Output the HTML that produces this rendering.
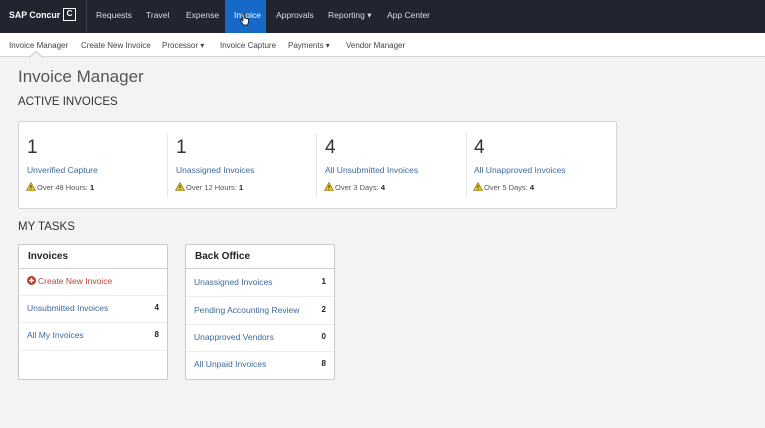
<!DOCTYPE html>
<html><head><meta charset="utf-8"><style>
*{margin:0;padding:0;box-sizing:border-box}
body{width:765px;height:428px;overflow:hidden;background:#f3f3f3;font-family:"Liberation Sans",Arial,sans-serif;position:relative;color:#333}
.a{position:absolute;white-space:nowrap}
.top{position:absolute;left:0;top:0;width:765px;height:33px;background:#21252f}
.nav{color:#d8dbe0;font-size:8.5px;top:10px}
.sub{position:absolute;left:0;top:33px;width:765px;height:24px;background:#fff;border-bottom:1px solid #d5d5d5}
.sn{color:#444;font-size:8px;top:41px}
.card{position:absolute;left:18px;top:121px;width:599px;height:88px;background:#fff;border:1px solid #d6d6d6;border-radius:2px}
.num{font-size:19px;color:#333;top:137px}
.lnk{color:#3d6a9a;font-size:8.5px}
.w{font-size:7.5px;color:#555;top:183px}
.w b{color:#222}
.vd{position:absolute;top:133px;width:1px;height:64px;background:#e6e6e6}
.pan{position:absolute;top:244px;width:150px;height:136px;background:#fff;border:1px solid #c9c9c9;border-radius:2px}
.ph{position:absolute;left:0;top:0;width:100%;height:24px;border-bottom:1px solid #cfcfcf;font-weight:bold;font-size:10px;padding:6px 0 0 9px;color:#222}
.row{position:absolute;left:0;width:100%;border-bottom:1px solid #ececec;font-size:8.5px;color:#3d6a9a;padding-left:8px}
.row b{position:absolute;right:8px;color:#222;font-size:8px}
</style></head><body>
<div class="top"></div>
<div class="a" style="left:9px;top:10px;color:#fff;font-weight:bold;font-size:8.8px">SAP Concur</div>
<div class="a" style="left:63px;top:8px;width:13px;height:13px;border:1.3px solid #fff;color:#fff;font-size:8px;font-weight:bold;text-align:center;line-height:10.4px">C</div>
<div class="a" style="left:86px;top:0;width:1px;height:33px;background:#3a3f4a"></div>
<div class="a nav" style="left:96px">Requests</div>
<div class="a nav" style="left:146px">Travel</div>
<div class="a nav" style="left:186px">Expense</div>
<div class="a" style="left:225px;top:0;width:41px;height:33px;background:#1769c8"></div>
<div class="a nav" style="left:234px;color:#fff">Invoice</div>
<svg class="a" style="left:240px;top:13px" width="9" height="13" viewBox="0 0 9 13"><path d="M3 1v7l-1.5-1.5-1 1L3.5 12h4l1-3V6L4.5 5V1z" fill="#fff" stroke="#000" stroke-width=".7"/></svg>
<div class="a nav" style="left:276px">Approvals</div>
<div class="a nav" style="left:328px">Reporting ▾</div>
<div class="a nav" style="left:387px">App Center</div>
<div class="sub"></div>
<div class="a sn" style="left:9px">Invoice Manager</div>
<svg class="a" style="left:29px;top:51px" width="14" height="7"><path d="M0 6.5L7 0.5L14 6.5" fill="#f3f3f3" stroke="#ccc"/></svg>
<div class="a sn" style="left:81px">Create New Invoice</div>
<div class="a sn" style="left:162px">Processor ▾</div>
<div class="a sn" style="left:220px">Invoice Capture</div>
<div class="a sn" style="left:288px">Payments ▾</div>
<div class="a sn" style="left:346px">Vendor Manager</div>
<div class="a" style="left:18px;top:67px;font-size:17px;color:#555;font-weight:300">Invoice Manager</div>
<div class="a" style="left:18px;top:96px;font-size:11.5px;color:#333">ACTIVE INVOICES</div>
<div class="card"></div>
<div class="vd" style="left:167px"></div><div class="vd" style="left:316px"></div><div class="vd" style="left:466px"></div>
<div class="a num" style="left:27px">1</div><div class="a num" style="left:176px">1</div><div class="a num" style="left:325px">4</div><div class="a num" style="left:474px">4</div>
<div class="a lnk" style="left:27px;top:165px">Unverified Capture</div>
<div class="a lnk" style="left:176px;top:165px">Unassigned Invoices</div>
<div class="a lnk" style="left:325px;top:165px">All Unsubmitted Invoices</div>
<div class="a lnk" style="left:474px;top:165px">All Unapproved Invoices</div>
<svg width="0" height="0" style="position:absolute"><defs><symbol id="t" viewBox="0 0 10 9"><path d="M5 .5L9.6 8.5H.4z" fill="#e8c21b" stroke="#7a6410" stroke-width=".6"/><path d="M5 3v3" stroke="#333" stroke-width="1"/><circle cx="5" cy="7.2" r=".5" fill="#333"/></symbol></defs></svg>
<svg class="a" style="left:26px;top:182px" width="10" height="9"><use href="#t"/></svg><div class="a w" style="left:37px">Over 48 Hours: <b>1</b></div>
<svg class="a" style="left:175px;top:182px" width="10" height="9"><use href="#t"/></svg><div class="a w" style="left:186px">Over 12 Hours: <b>1</b></div>
<svg class="a" style="left:324px;top:182px" width="10" height="9"><use href="#t"/></svg><div class="a w" style="left:335px">Over 3 Days: <b>4</b></div>
<svg class="a" style="left:473px;top:182px" width="10" height="9"><use href="#t"/></svg><div class="a w" style="left:484px">Over 5 Days: <b>4</b></div>
<div class="a" style="left:18px;top:221px;font-size:11.5px;color:#333">MY TASKS</div>
<div class="pan" style="left:18px">
<div class="ph">Invoices</div>
<div class="row" style="top:24px;height:27px;padding-top:7px;color:#b5473a"><svg width="9" height="9" style="vertical-align:-1px;margin-right:2px"><circle cx="4.5" cy="4.5" r="4.5" fill="#c0392b"/><path d="M4.5 2v5M2 4.5h5" stroke="#fff" stroke-width="1.4"/></svg>Create New Invoice</div>
<div class="row" style="top:51px;height:27px;padding-top:7px">Unsubmitted Invoices<b>4</b></div>
<div class="row" style="top:78px;height:28px;padding-top:7px">All My Invoices<b>8</b></div>
</div>
<div class="pan" style="left:185px">
<div class="ph">Back Office</div>
<div class="row" style="top:24px;height:28px;padding-top:8px">Unassigned Invoices<b>1</b></div>
<div class="row" style="top:52px;height:28px;padding-top:8px">Pending Accounting Review<b>2</b></div>
<div class="row" style="top:80px;height:27px;padding-top:7px">Unapproved Vendors<b>0</b></div>
<div class="row" style="top:107px;height:28px;padding-top:7px;border:0">All Unpaid Invoices<b>8</b></div>
</div>
</body></html>
